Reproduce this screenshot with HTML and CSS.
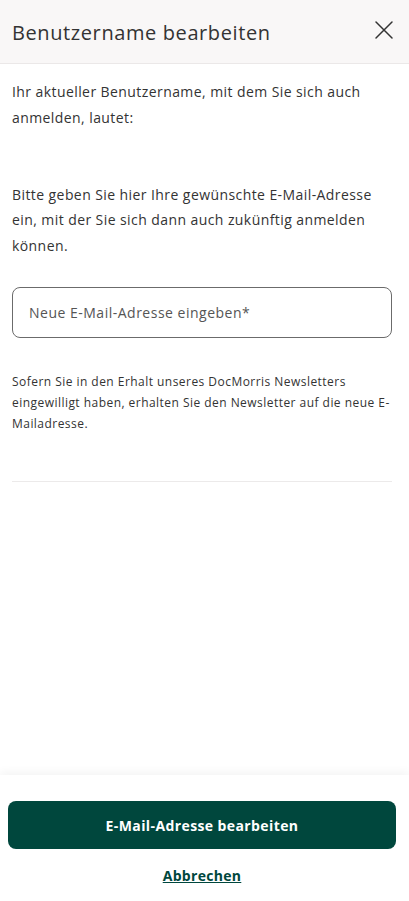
FILE: index.html
```html
<!DOCTYPE html>
<html lang="de">
<head>
<meta charset="utf-8">
<title>Benutzername bearbeiten</title>
<link rel="stylesheet" href="styles.css">
</head>
<body>
<div class="modal">
  <header class="modal-header">
    <h1 class="modal-title">Benutzername bearbeiten</h1>
    <button class="close-btn" aria-label="Schließen">
      <svg width="20" height="20" viewBox="0 0 20 20" fill="none" stroke="#333" stroke-width="1.5" stroke-linecap="round">
        <path d="M2 2 L18 18 M18 2 L2 18"/>
      </svg>
    </button>
  </header>
  <main class="modal-body">
    <p class="text">Ihr aktueller Benutzername, mit dem Sie sich auch anmelden, lautet:</p>
    <p class="text username"></p>
    <p class="text">Bitte geben Sie hier Ihre gewünschte E-Mail-Adresse ein, mit der Sie sich dann auch zukünftig anmelden können.</p>
    <div class="field">
      <input class="input" type="email" placeholder="Neue E-Mail-Adresse eingeben*">
    </div>
    <p class="hint">Sofern Sie in den Erhalt unseres DocMorris Newsletters eingewilligt haben, erhalten Sie den Newsletter auf die neue E-Mailadresse.</p>
    <hr class="divider">
  </main>
  <footer class="modal-footer">
    <button class="primary-btn">E-Mail-Adresse bearbeiten</button>
    <a class="cancel-link" href="#">Abbrechen</a>
  </footer>
</div>
</body>
</html>
```
FILE: styles.css
```css
* { box-sizing: border-box; }
html, body { margin: 0; padding: 0; height: 100%; }
body {
  font-family: "Open Sans", "Liberation Sans", sans-serif;
  color: #333;
  background: #fff;
}
.modal {
  display: flex;
  flex-direction: column;
  height: 100vh;
}
.modal-header {
  height: 64px;
  flex: none;
  display: flex;
  align-items: center;
  justify-content: space-between;
  padding: 0 14px 0 12px;
  background: #f9f7f7;
  border-bottom: 1px solid #ebe8e8;
}
.modal-title {
  margin: 2px 0 0;
  font-size: 20px;
  font-weight: 400;
  color: #333;
  letter-spacing: 0.6px;
}
.close-btn {
  border: 0;
  background: none;
  padding: 0;
  width: 22px;
  height: 22px;
  display: flex;
  align-items: center;
  justify-content: center;
  margin-top: -3px;
}
.modal-body {
  flex: 1;
  padding: 15px 17px 0 12px;
}
.text {
  margin: 0;
  font-size: 14px;
  line-height: 25.6px;
  color: #333;
  letter-spacing: 0.42px;
}
.username {
  height: 25.6px;
  margin: 0 0 26px;
}
.field {
  margin-top: 28px;
}
.input {
  display: block;
  width: 380px;
  height: 51px;
  border: 1px solid #6b6b6b;
  border-radius: 8px;
  padding: 0 16px;
  font-family: inherit;
  font-size: 14px;
  letter-spacing: 0.5px;
  color: #333;
  background: #fff;
}
.input::placeholder { color: #555; }
.hint {
  margin: 33px 0 0;
  font-size: 12px;
  line-height: 21px;
  color: #333;
  letter-spacing: 0.46px;
}
.divider {
  margin: 47px 0 0;
  width: 380px;
  border: 0;
  border-top: 1px solid #eceaea;
}
.modal-footer {
  flex: none;
  padding: 26px 13px 15px 8px;
  display: flex;
  flex-direction: column;
  align-items: center;
  box-shadow: 0 -4px 8px rgba(0,0,0,0.04);
}
.primary-btn {
  width: 100%;
  height: 48px;
  border: 0;
  border-radius: 8px;
  background: #00473d;
  color: #fff;
  font-family: inherit;
  font-size: 14px;
  font-weight: 700;
  letter-spacing: 0.4px;
}
.cancel-link {
  margin-top: 17px;
  font-size: 14px;
  font-weight: 700;
  color: #00473d;
  text-decoration: underline;
  line-height: 20px;
  letter-spacing: 0.3px;
}
```
